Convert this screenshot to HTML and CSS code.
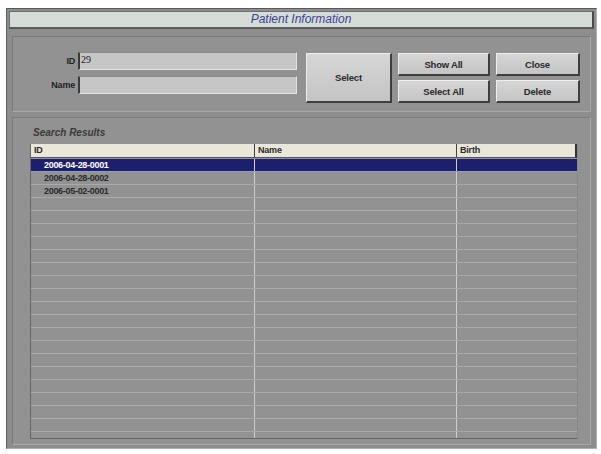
FILE: index.html
```html
<!DOCTYPE html>
<html>
<head>
<meta charset="utf-8">
<link rel="stylesheet" href="styles.css">
</head>
<body>
<div class="window">
  <div class="titlebar">Patient Information</div>
  <div class="top-panel">
    <div class="form">
      <label class="lbl">ID</label>
      <div class="input">29</div>
      <label class="lbl">Name</label>
      <div class="input"></div>
    </div>
    <button class="btn btn-select">Select</button>
    <div class="btn-grid">
      <button class="btn">Show All</button>
      <button class="btn">Close</button>
      <button class="btn">Select All</button>
      <button class="btn">Delete</button>
    </div>
  </div>
  <div class="results-panel">
    <div class="results-title">Search Results</div>
    <div class="table">
      <div class="thead">
        <div class="th c1">ID</div>
        <div class="th c2">Name</div>
        <div class="th c3">Birth</div>
      </div>
      <div class="tbody">
        <div class="row selected"><div class="td c1">2006-04-28-0001</div><div class="td c2"></div><div class="td c3"></div></div>
        <div class="row"><div class="td c1">2006-04-28-0002</div><div class="td c2"></div><div class="td c3"></div></div>
        <div class="row"><div class="td c1">2006-05-02-0001</div><div class="td c2"></div><div class="td c3"></div></div>
        <div class="row"><div class="td c1"></div><div class="td c2"></div><div class="td c3"></div></div>
        <div class="row"><div class="td c1"></div><div class="td c2"></div><div class="td c3"></div></div>
        <div class="row"><div class="td c1"></div><div class="td c2"></div><div class="td c3"></div></div>
        <div class="row"><div class="td c1"></div><div class="td c2"></div><div class="td c3"></div></div>
        <div class="row"><div class="td c1"></div><div class="td c2"></div><div class="td c3"></div></div>
        <div class="row"><div class="td c1"></div><div class="td c2"></div><div class="td c3"></div></div>
        <div class="row"><div class="td c1"></div><div class="td c2"></div><div class="td c3"></div></div>
        <div class="row"><div class="td c1"></div><div class="td c2"></div><div class="td c3"></div></div>
        <div class="row"><div class="td c1"></div><div class="td c2"></div><div class="td c3"></div></div>
        <div class="row"><div class="td c1"></div><div class="td c2"></div><div class="td c3"></div></div>
        <div class="row"><div class="td c1"></div><div class="td c2"></div><div class="td c3"></div></div>
        <div class="row"><div class="td c1"></div><div class="td c2"></div><div class="td c3"></div></div>
        <div class="row"><div class="td c1"></div><div class="td c2"></div><div class="td c3"></div></div>
        <div class="row"><div class="td c1"></div><div class="td c2"></div><div class="td c3"></div></div>
        <div class="row"><div class="td c1"></div><div class="td c2"></div><div class="td c3"></div></div>
        <div class="row"><div class="td c1"></div><div class="td c2"></div><div class="td c3"></div></div>
        <div class="row"><div class="td c1"></div><div class="td c2"></div><div class="td c3"></div></div>
        <div class="row"><div class="td c1"></div><div class="td c2"></div><div class="td c3"></div></div>
        <div class="row"><div class="td c1"></div><div class="td c2"></div><div class="td c3"></div></div>
      </div>
    </div>
  </div>
</div>
</body>
</html>
```

FILE: styles.css
```css
* { box-sizing: border-box; }
html, body { margin: 0; padding: 0; background: #ffffff; }
body { font-family: "Liberation Sans", Arial, sans-serif; }

.window {
  margin: 8px 0 0 6px;
  width: 591px;
  height: 441px;
  background: #8d8d8d;
  border: 1px solid #5a5a5a;
  border-right-color: #b0b0b0;
  border-bottom-color: #b0b0b0;
  padding: 2px 5px 0 5px;
  display: flex;
  flex-direction: column;
}

.titlebar {
  margin: 0 -3px;
  height: 18px;
  background: #d6dcd8;
  border: 1px solid #6d6d6d;
  border-right: 2px solid #4a4a4a;
  border-bottom: 2px solid #5a5a5a;
  color: #3d3f94;
  font-style: italic;
  font-size: 12px;
  line-height: 15px;
  text-align: center;
}

.top-panel {
  margin-top: 7px;
  height: 76px;
  background: #929292;
  border: 1px solid #7a7a7a;
  border-right-color: #a8a8a8;
  border-bottom-color: #a8a8a8;
  display: flex;
  align-items: flex-start;
  padding-top: 15px;
}

.form {
  display: grid;
  grid-template-columns: 62px 219px;
  column-gap: 3px;
  row-gap: 6px;
  align-items: center;
}
.lbl {
  text-align: right;
  font-size: 9px;
  font-weight: bold;
  color: #1f1f1f;
  letter-spacing: -0.2px;
}
.input {
  height: 18px;
  background: #c6c6c6;
  border-top: 1px solid #8a8a8a;
  border-left: 2px solid #3a3a3a;
  border-bottom: 1px solid #e2e2e2;
  border-right: 1px solid #e2e2e2;
  font-family: "Liberation Serif", serif;
  font-size: 10px;
  line-height: 14px;
  padding-left: 1px;
  color: #202020;
}

.btn {
  font-family: "Liberation Sans", Arial, sans-serif;
  font-size: 9.5px;
  font-weight: bold;
  color: #2a2a2a;
  letter-spacing: -0.2px;
  background: linear-gradient(#d6d6d6, #c4c4c4);
  border: 1px solid #eeeeee;
  border-right: 2px solid #3e3e3e;
  border-bottom: 2px solid #3e3e3e;
  padding: 0;
  margin: 0;
}
.btn-select {
  margin-left: 9px;
  width: 86px;
  height: 50px;
  margin-top: 1px;
}
.btn-grid {
  margin-left: 6px;
  margin-top: 1px;
  display: grid;
  grid-template-columns: 92px 84px;
  grid-template-rows: 23px 23px;
  column-gap: 6px;
  row-gap: 4px;
}

.results-panel {
  margin-top: 5px;
  height: 328px;
  background: #929292;
  border: 1px solid #7c7c7c;
  border-right-color: #a8a8a8;
  border-bottom-color: #a8a8a8;
  padding: 9px 12px 0 17px;
  display: flex;
  flex-direction: column;
}
.results-title {
  font-size: 10px;
  font-style: italic;
  font-weight: bold;
  color: #3a3a3a;
  padding-left: 3px;
  height: 17px;
  line-height: 12px;
}
.table {
  width: 548px;
  height: 295px;
  border-left: 1px solid #666666;
  border-bottom: 1px solid #666666;
  border-right: 1px solid #8a8a8a;
  overflow: hidden;
  display: flex;
  flex-direction: column;
}
.thead {
  display: flex;
  height: 14px;
  background: #e9e7da;
  border-bottom: 1px solid #555555;
  border-right: 2px solid #333333;
}
.th {
  font-size: 9px;
  font-weight: bold;
  color: #2a2a2a;
  line-height: 13px;
  padding-left: 3px;
  letter-spacing: -0.2px;
}
.c1 { width: 223px; }
.c2 { width: 202px; border-left: 1px solid #cfcfcf; }
.c3 { flex: 1; border-left: 1px solid #cfcfcf; }
.thead .c2, .thead .c3 { border-left: 1px solid #444444; }

.tbody { padding-top: 1px; }
.row {
  display: flex;
  height: 13px;
  border-bottom: 1px solid #a9a9a9;
}
.row.selected {
  background: #1e1f6c;
  border-bottom-color: #8fa0c8;
}
.td {
  font-size: 9px;
  font-weight: bold;
  color: #2b2b2b;
  line-height: 12px;
  letter-spacing: -0.3px;
}
.td.c1 { padding-left: 13px; }
.row.selected .td { color: #ffffff; }
.row.selected .c1 { border-left: none; }
```
